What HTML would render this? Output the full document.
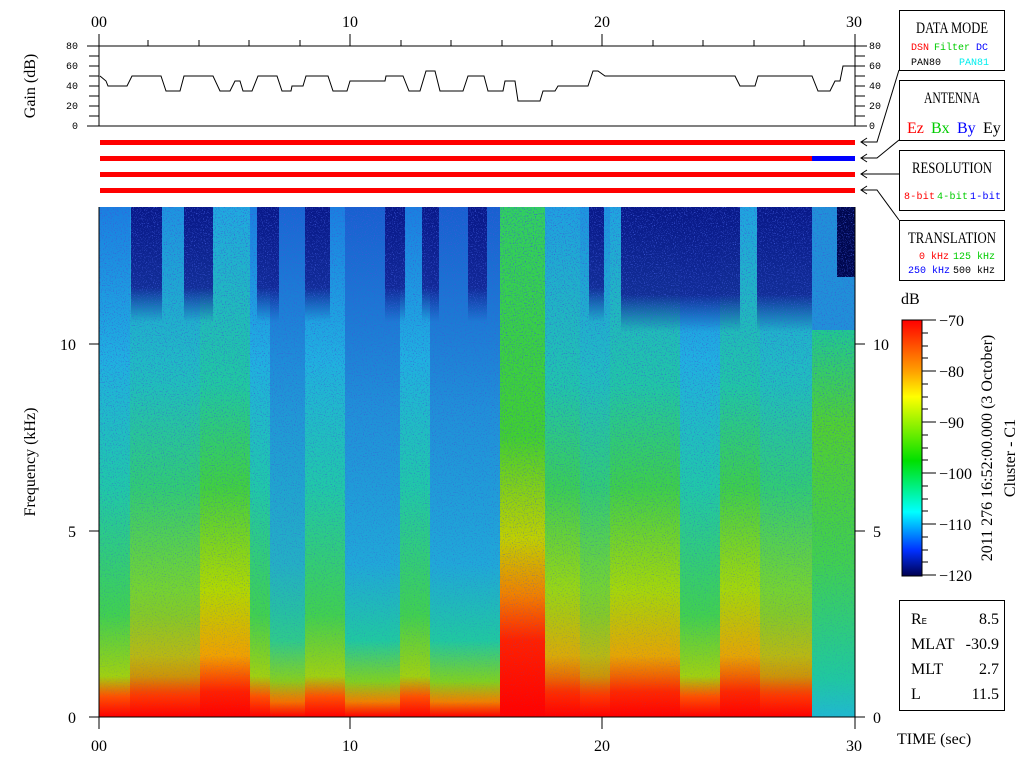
<!DOCTYPE html>
<html><head><meta charset="utf-8"><style>
html,body{margin:0;padding:0;background:#fff;width:1024px;height:768px;overflow:hidden}
svg{display:block}
.s{font-family:"Liberation Serif",serif;font-size:16px}
.m{font-family:"Liberation Mono",monospace;font-size:10px}
</style></head><body>
<svg width="1024" height="768" viewBox="0 0 1024 768" xmlns="http://www.w3.org/2000/svg">
<defs>
<linearGradient id="base" x1="0" y1="0" x2="0" y2="1">
<stop offset="0" stop-color="#1a80e0"/><stop offset="0.3" stop-color="#20b0e0"/><stop offset="0.55" stop-color="#20c8a8"/><stop offset="0.8" stop-color="#40d050"/><stop offset="0.92" stop-color="#a0d010"/><stop offset="0.96" stop-color="#ff5000"/><stop offset="1" stop-color="#ff0000"/>
</linearGradient>
<linearGradient id="hot" x1="0" y1="0" x2="0" y2="1">
<stop offset="0" stop-color="#20a8e0"/><stop offset="0.35" stop-color="#20c8a0"/><stop offset="0.55" stop-color="#40d040"/><stop offset="0.75" stop-color="#b0d800"/><stop offset="0.88" stop-color="#f0a000"/><stop offset="0.95" stop-color="#ff2000"/><stop offset="1" stop-color="#ff0000"/>
</linearGradient>
<linearGradient id="vhot" x1="0" y1="0" x2="0" y2="1">
<stop offset="0" stop-color="#30d060"/><stop offset="0.45" stop-color="#40d030"/><stop offset="0.65" stop-color="#c0d000"/><stop offset="0.76" stop-color="#f08000"/><stop offset="0.85" stop-color="#ff2000"/><stop offset="1" stop-color="#ff0000"/>
</linearGradient>
<linearGradient id="weak" x1="0" y1="0" x2="0" y2="1">
<stop offset="0" stop-color="#1860d0"/><stop offset="0.4" stop-color="#2090d8"/><stop offset="0.7" stop-color="#20a8d8"/><stop offset="0.85" stop-color="#20c8a0"/><stop offset="0.93" stop-color="#80d020"/><stop offset="0.97" stop-color="#f08000"/><stop offset="1" stop-color="#ff0000"/>
</linearGradient>
<linearGradient id="right" x1="0" y1="0" x2="0" y2="1">
<stop offset="0" stop-color="#20c890"/><stop offset="0.25" stop-color="#50d030"/><stop offset="0.6" stop-color="#40d050"/><stop offset="0.9" stop-color="#20c8a0"/><stop offset="1" stop-color="#20b8d0"/>
</linearGradient>
<linearGradient id="dark" x1="0" y1="0" x2="0" y2="1">
<stop offset="0" stop-color="#081888"/><stop offset="0.7" stop-color="#102090" stop-opacity="0.9"/><stop offset="1" stop-color="#1030a0" stop-opacity="0"/>
</linearGradient>
<linearGradient id="cb" x1="0" y1="0" x2="0" y2="1">
<stop offset="0" stop-color="#ff0000"/><stop offset="0.2" stop-color="#ffa000"/><stop offset="0.3" stop-color="#ffff00"/><stop offset="0.55" stop-color="#00e000"/><stop offset="0.75" stop-color="#00ffff"/><stop offset="0.9" stop-color="#0030ff"/><stop offset="1" stop-color="#000050"/>
</linearGradient>
<filter id="nz" x="0" y="0" width="1" height="1"><feTurbulence type="fractalNoise" baseFrequency="0.9" numOctaves="1" seed="3"/><feColorMatrix values="0 0 0 0 0.05  0 0 0 0 0.1  0 0 0 0 0.7  0 0 0 6 -3.4"/></filter>
<linearGradient id="nzfade" x1="0" y1="0" x2="0" y2="1"><stop offset="0" stop-color="#fff"/><stop offset="0.6" stop-color="#fff" stop-opacity="0.6"/><stop offset="1" stop-color="#fff" stop-opacity="0.1"/></linearGradient>
<mask id="nm"><rect x="99" y="207" width="756" height="510" fill="url(#nzfade)"/></mask>
</defs>

<g class="s" text-anchor="middle"><text x="99" y="27">00</text><text x="350" y="27">10</text><text x="602" y="27">20</text><text x="854" y="27">30</text></g>
<g stroke="#000" stroke-width="1">
<line x1="99" y1="34" x2="99" y2="46"/><line x1="350" y1="34" x2="350" y2="46"/><line x1="602" y1="34" x2="602" y2="46"/><line x1="855" y1="34" x2="855" y2="46"/>
<line x1="148" y1="40" x2="148" y2="46"/><line x1="199" y1="40" x2="199" y2="46"/><line x1="249" y1="40" x2="249" y2="46"/><line x1="300" y1="40" x2="300" y2="46"/>
<line x1="401" y1="40" x2="401" y2="46"/><line x1="451" y1="40" x2="451" y2="46"/><line x1="502" y1="40" x2="502" y2="46"/><line x1="552" y1="40" x2="552" y2="46"/>
<line x1="653" y1="40" x2="653" y2="46"/><line x1="703" y1="40" x2="703" y2="46"/><line x1="754" y1="40" x2="754" y2="46"/><line x1="804" y1="40" x2="804" y2="46"/>
<line x1="87" y1="46" x2="867" y2="46"/><line x1="87" y1="126" x2="867" y2="126"/><line x1="99" y1="34" x2="99" y2="126"/><line x1="855" y1="34" x2="855" y2="126"/>
<line x1="89" y1="56" x2="99" y2="56"/><line x1="89" y1="66" x2="99" y2="66"/><line x1="89" y1="76" x2="99" y2="76"/><line x1="89" y1="86" x2="99" y2="86"/><line x1="89" y1="96" x2="99" y2="96"/><line x1="89" y1="106" x2="99" y2="106"/><line x1="89" y1="116" x2="99" y2="116"/>
<line x1="855" y1="56" x2="865" y2="56"/><line x1="855" y1="66" x2="865" y2="66"/><line x1="855" y1="76" x2="865" y2="76"/><line x1="855" y1="86" x2="865" y2="86"/><line x1="855" y1="96" x2="865" y2="96"/><line x1="855" y1="106" x2="865" y2="106"/><line x1="855" y1="116" x2="865" y2="116"/>
</g>
<g class="m"><text x="66" y="49">80</text><text x="66" y="69">60</text><text x="66" y="89">40</text><text x="66" y="109">20</text><text x="72" y="129">0</text>
<text x="869" y="49">80</text><text x="869" y="69">60</text><text x="869" y="89">40</text><text x="869" y="109">20</text><text x="869" y="129">0</text></g>
<text class="s" transform="translate(35,86) rotate(-90)" text-anchor="middle">Gain (dB)</text>
<polyline fill="none" stroke="#000" stroke-width="1" points="100,76 106,81 108,86 127,86 132,76 161,76 166,91 180,91 184,76 213,76 220,91 230,91 235,81 240,81 243,91 252,91 258,76 277,76 282,91 291,91 292,86 303,86 306,76 328,76 333,91 347,91 350,81 385,81 386,76 403,76 409,91 420,91 426,71 435,71 440,91 463,91 468,76 484,76 488,91 503,91 505,81 515,81 518,101 540,101 543,91 555,91 558,86 588,86 593,71 598,71 605,76 735,76 740,86 755,86 758,76 812,76 818,91 830,91 835,81 840,81 843,66 855,66"/>

<rect x="100" y="140" width="755" height="5" fill="#ff0000"/>
<rect x="100" y="156" width="712" height="5" fill="#ff0000"/><rect x="812" y="156" width="43" height="5" fill="#0000ff"/>
<rect x="100" y="172" width="755" height="5" fill="#ff0000"/>
<rect x="100" y="188" width="755" height="5" fill="#ff0000"/>

<rect x="99" y="207" width="756" height="510" fill="url(#base)"/>
<rect x="130" y="207" width="70" height="510" fill="url(#hot)" opacity="0.5"/>
<rect x="200" y="207" width="50" height="510" fill="url(#hot)"/>
<rect x="270" y="207" width="35" height="510" fill="url(#weak)" opacity="0.8"/>
<rect x="345" y="207" width="55" height="510" fill="url(#weak)"/>
<rect x="430" y="207" width="70" height="510" fill="url(#weak)"/>
<rect x="500" y="207" width="45" height="510" fill="url(#vhot)"/>
<rect x="545" y="207" width="35" height="510" fill="url(#hot)" opacity="0.8"/>
<rect x="580" y="207" width="30" height="510" fill="url(#hot)" opacity="0.5"/>
<rect x="610" y="207" width="70" height="510" fill="url(#hot)" opacity="0.9"/>
<rect x="720" y="207" width="40" height="510" fill="url(#hot)" opacity="0.9"/>
<rect x="760" y="207" width="52" height="510" fill="url(#hot)" opacity="0.5"/>
<rect x="812" y="330" width="43" height="387" fill="url(#right)"/>
<rect x="812" y="207" width="43" height="123" fill="#2090d8"/>
<g fill="url(#dark)">
<rect x="131" y="207" width="31" height="115"/><rect x="184" y="207" width="29" height="115"/><rect x="257" y="207" width="22" height="115"/><rect x="305" y="207" width="25" height="115"/><rect x="385" y="207" width="20" height="115"/><rect x="422" y="207" width="17" height="115"/><rect x="468" y="207" width="19" height="115"/><rect x="589" y="207" width="15" height="115"/><rect x="621" y="207" width="119" height="125"/><rect x="757" y="207" width="55" height="125"/>
</g>
<rect x="837" y="207" width="18" height="70" fill="#000850"/>
<g mask="url(#nm)"><rect x="99" y="207" width="756" height="510" filter="url(#nz)" opacity="0.9"/></g>

<g stroke="#000">
<line x1="99" y1="207" x2="99" y2="729"/><line x1="855" y1="207" x2="855" y2="729"/><line x1="89" y1="717" x2="865" y2="717"/>
<line x1="89" y1="344" x2="99" y2="344"/><line x1="89" y1="531" x2="99" y2="531"/>
<line x1="855" y1="344" x2="865" y2="344"/><line x1="855" y1="531" x2="865" y2="531"/>
<line x1="350" y1="717" x2="350" y2="729"/><line x1="602" y1="717" x2="602" y2="729"/>
</g>
<g class="s"><text x="60" y="350">10</text><text x="68" y="537">5</text><text x="68" y="723">0</text>
<text x="873" y="350">10</text><text x="873" y="537">5</text><text x="873" y="723">0</text></g>
<g class="s" text-anchor="middle"><text x="99" y="751">00</text><text x="350" y="751">10</text><text x="602" y="751">20</text><text x="854" y="751">30</text></g>
<text class="s" x="897" y="744">TIME (sec)</text>
<text class="s" transform="translate(35,462) rotate(-90)" text-anchor="middle">Frequency (kHz)</text>

<g fill="none" stroke="#000">
<rect x="899.5" y="10.5" width="105" height="60"/><rect x="899.5" y="80.5" width="105" height="60"/><rect x="899.5" y="150.5" width="105" height="60"/><rect x="899.5" y="220.5" width="105" height="60"/>
<polyline points="899,70 877,142 861,142"/><polyline points="899,140 877,158 861,158"/><polyline points="899,174 861,174"/><polyline points="899,220 877,190 861,190"/>
<polyline points="867,138 861,142 867,146"/><polyline points="867,154 861,158 867,162"/><polyline points="867,170 861,174 867,178"/><polyline points="867,186 861,190 867,194"/>
</g>
<g class="s" text-anchor="middle"><text x="952" y="33" textLength="72" lengthAdjust="spacingAndGlyphs">DATA MODE</text><text x="952" y="103" textLength="56" lengthAdjust="spacingAndGlyphs">ANTENNA</text><text x="952" y="173" textLength="80" lengthAdjust="spacingAndGlyphs">RESOLUTION</text><text x="952" y="243" textLength="88" lengthAdjust="spacingAndGlyphs">TRANSLATION</text></g>
<g class="m" font-size="9.5"><text x="911" y="50" fill="#f00">DSN</text><text x="934" y="50" fill="#0c0">Filter</text><text x="976" y="50" fill="#00f">DC</text>
<text x="911" y="65">PAN80</text><text x="959" y="65" fill="#0ee">PAN81</text>
<text x="904" y="199" fill="#f00" textLength="31">8-bit</text><text x="937" y="199" fill="#0c0" textLength="31">4-bit</text><text x="970" y="199" fill="#00f" textLength="31">1-bit</text>
<text x="919" y="259" fill="#f00">0 kHz</text><text x="953" y="259" fill="#0c0">125 kHz</text>
<text x="908" y="273" fill="#00f">250 kHz</text><text x="953" y="273">500 kHz</text></g>
<g class="s"><text x="907" y="133" fill="#f00">Ez</text><text x="931" y="133" fill="#0c0">Bx</text><text x="957" y="133" fill="#00f">By</text><text x="983" y="133">Ey</text></g>

<text class="s" x="901" y="304">dB</text>
<rect x="902" y="320" width="20" height="256" fill="url(#cb)" stroke="#000"/>
<g stroke="#000"><line x1="922" y1="320" x2="936" y2="320"/><line x1="922" y1="371" x2="936" y2="371"/><line x1="922" y1="422" x2="936" y2="422"/><line x1="922" y1="473" x2="936" y2="473"/><line x1="922" y1="524" x2="936" y2="524"/><line x1="922" y1="575" x2="936" y2="575"/>
<line x1="922" y1="333" x2="928" y2="333"/><line x1="922" y1="346" x2="928" y2="346"/><line x1="922" y1="358" x2="928" y2="358"/><line x1="922" y1="384" x2="928" y2="384"/><line x1="922" y1="397" x2="928" y2="397"/><line x1="922" y1="409" x2="928" y2="409"/><line x1="922" y1="435" x2="928" y2="435"/><line x1="922" y1="448" x2="928" y2="448"/><line x1="922" y1="460" x2="928" y2="460"/><line x1="922" y1="486" x2="928" y2="486"/><line x1="922" y1="499" x2="928" y2="499"/><line x1="922" y1="511" x2="928" y2="511"/><line x1="922" y1="537" x2="928" y2="537"/><line x1="922" y1="550" x2="928" y2="550"/><line x1="922" y1="562" x2="928" y2="562"/></g>
<g class="s"><text x="939" y="326">−70</text><text x="939" y="377">−80</text><text x="939" y="428">−90</text><text x="939" y="479">−100</text><text x="939" y="530">−110</text><text x="939" y="581">−120</text></g>
<text class="s" transform="translate(992,448) rotate(-90)" text-anchor="middle">2011 276 16:52:00.000 (3 October)</text>
<text class="s" transform="translate(1015,458) rotate(-90)" text-anchor="middle">Cluster - C1</text>

<rect x="899.5" y="600.5" width="105" height="110" fill="none" stroke="#000"/>
<g class="s"><text x="911" y="624">R<tspan font-size="9" font-family="Liberation Mono">E</tspan></text><text x="911" y="649">MLAT</text><text x="911" y="674">MLT</text><text x="911" y="699">L</text></g>
<g class="s" text-anchor="end"><text x="999" y="624">8.5</text><text x="999" y="649">-30.9</text><text x="999" y="674">2.7</text><text x="999" y="699">11.5</text></g>
</svg>
</body></html>
